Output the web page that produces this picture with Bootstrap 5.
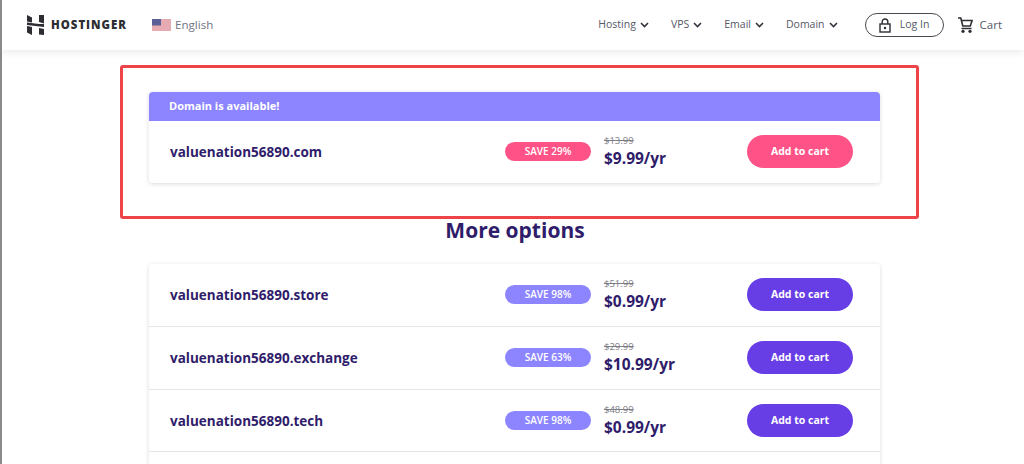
<!DOCTYPE html>
<html lang="en">
<head>
<meta charset="utf-8">
<title>Hostinger domain search</title>
<link rel="stylesheet" href="https://cdn.jsdelivr.net/npm/bootstrap@5.3.0/dist/css/bootstrap.min.css">
<style>
html,body{height:464px;overflow:hidden}
body{font-family:"Open Sans","Noto Sans",sans-serif;background:#fff;border-left:2px solid #8a8a8a;color:#2f1c6a}
.topbar{height:50px;background:#fff;box-shadow:0 2px 8px rgba(0,0,0,.09);padding:0 22px 0 25px;position:relative;z-index:2}
.brand-name{font-weight:800;font-size:11.4px;letter-spacing:1px;color:#2d2d33;margin-left:7px}
.lang-name{font-size:11.6px;color:#727586;margin-left:4px}
.lang-wrap{margin-left:25px}
.menu-item{font-size:10.5px;color:#555866;display:flex;align-items:center;gap:4px}
.menu-gap{gap:22px;margin-right:27px}
.login-pill{width:79px;height:24px;border:1px solid #4a4a52;border-radius:12px;font-size:10.5px;color:#555866;gap:9px;margin-right:14px}
.cart-text{font-size:11.5px;color:#555866;margin-left:7px}
.main-flow{margin-left:118px;width:799px;padding-top:15px}
.red-frame{border:3px solid #ec4448;border-radius:3px;padding:24px 35px 33px 26px;height:154px}
.result-panel{width:731px;border-radius:4px;background:#fff;box-shadow:0 1px 4px rgba(29,30,32,.16);overflow:hidden}
.avail-head{background:#8c85ff;color:#fff;height:29px;font-weight:700;font-size:11px;padding-left:20px;display:flex;align-items:center}
.dom-row{height:62px;display:flex;align-items:center;padding:0 0 1px 21px;background:#fff}
.dom-row+.dom-row{border-top:1px solid #e4e4ea;height:63px}
.dom-row+.dom-row+.dom-row{height:62px;padding-bottom:0}
.dom-name{font-weight:700;font-size:13.5px;width:335px;color:#2f1c6a;margin-top:2px}
.save-tag{width:86px;height:19px;border-radius:10px;color:#fff;font-size:10px;font-weight:600;display:flex;align-items:center;justify-content:center;margin-right:13px}
.tag-pink{background:#ff5286}
.tag-violet{background:#8c85ff}
.price-box{width:143px;line-height:1}
.old-price{font-size:9.5px;color:#7d7d86;text-decoration:line-through;display:block;margin-bottom:6px;margin-top:-1px}
.new-price{font-size:15.5px;font-weight:700;color:#2f1c6a;display:block}
.cart-btn{width:106px;height:33px;border-radius:17px;border:0;color:#fff;font-size:10.5px;font-weight:700;padding:0}
.btn-pink,.btn-pink:hover{background:#ff5286;color:#fff}
.btn-violet,.btn-violet:hover{background:#673de6;color:#fff}
.section-title{font-size:21px;font-weight:700;color:#2f1c6a;text-align:center;margin:0;height:45px;line-height:22px;width:790px}
.list-panel{margin-left:29px;height:300px}
</style>
</head>
<body>
<header class="topbar d-flex align-items-center justify-content-between">
  <div class="d-flex align-items-center">
    <svg width="17" height="20" viewBox="0 0 17 20" aria-hidden="true"><path fill="#2d2d33" d="M0 0l5 2.500v5l-5-1zM12 0l5-.5V8.500l-5-1.500zM0 7.500l12 1.500 5 0v3L0 10zM0 11l5 1v8l-5-2.500zM12 13l5 1v6l-5-.5z"/></svg>
    <span class="brand-name">HOSTINGER</span>
    <span class="lang-wrap d-flex align-items-center">
      <svg width="19" height="12" viewBox="0 0 19 12" aria-hidden="true"><rect width="19" height="12" fill="#f3d5d8"/><path d="M0 1h19M0 3h19M0 5h19M0 7h19M0 9h19M0 11h19" stroke="#d9808c" stroke-width="1"/><rect width="9" height="6.500" fill="#5b5f95"/></svg>
      <span class="lang-name">English</span>
    </span>
  </div>
  <div class="d-flex align-items-center">
    <nav class="d-flex menu-gap">
      <span class="menu-item">Hosting <svg width="9" height="6" viewBox="0 0 9 6" aria-hidden="true"><path d="M1 1l3.500 3.500L8 1" fill="none" stroke="#33333b" stroke-width="1.600"/></svg></span>
      <span class="menu-item">VPS <svg width="9" height="6" viewBox="0 0 9 6" aria-hidden="true"><path d="M1 1l3.500 3.500L8 1" fill="none" stroke="#33333b" stroke-width="1.600"/></svg></span>
      <span class="menu-item">Email <svg width="9" height="6" viewBox="0 0 9 6" aria-hidden="true"><path d="M1 1l3.500 3.500L8 1" fill="none" stroke="#33333b" stroke-width="1.600"/></svg></span>
      <span class="menu-item">Domain <svg width="9" height="6" viewBox="0 0 9 6" aria-hidden="true"><path d="M1 1l3.500 3.500L8 1" fill="none" stroke="#33333b" stroke-width="1.600"/></svg></span>
    </nav>
    <div class="login-pill d-flex align-items-center justify-content-center">
      <svg width="12" height="15" viewBox="0 0 12 15" aria-hidden="true"><rect x="1" y="6" width="10" height="8" fill="none" stroke="#2d2d33" stroke-width="1.400"/><path d="M3.200 6V3.800a2.800 2.800 0 0 1 5.600 0V6" fill="none" stroke="#2d2d33" stroke-width="1.400"/><circle cx="6" cy="10" r="1.200" fill="#2d2d33"/></svg>
      <span>Log In</span>
    </div>
    <svg width="15" height="16" viewBox="0 0 15 16" aria-hidden="true"><path d="M0 1h2.800l2 8h7.500l1.800-5.500H3.500" fill="none" stroke="#2d2d33" stroke-width="1.600"/><path d="M3.500 11.500h10" stroke="#2d2d33" stroke-width="1.500"/><circle cx="5" cy="14.300" r="1.600" fill="#2d2d33"/><circle cx="12" cy="14.300" r="1.600" fill="#2d2d33"/></svg>
    <span class="cart-text">Cart</span>
  </div>
</header>
<main class="main-flow">
  <section class="red-frame">
    <div class="result-panel">
      <div class="avail-head">Domain is available!</div>
      <div class="dom-row">
        <span class="dom-name">valuenation56890.com</span>
        <span class="save-tag tag-pink">SAVE 29%</span>
        <span class="price-box"><span class="old-price">$13.99</span><span class="new-price">$9.99/yr</span></span>
        <button class="btn cart-btn btn-pink" type="button">Add to cart</button>
      </div>
    </div>
  </section>
  <h2 class="section-title">More options</h2>
  <div class="result-panel list-panel">
    <div class="dom-row">
      <span class="dom-name">valuenation56890.store</span>
      <span class="save-tag tag-violet">SAVE 98%</span>
      <span class="price-box"><span class="old-price">$51.99</span><span class="new-price">$0.99/yr</span></span>
      <button class="btn cart-btn btn-violet" type="button">Add to cart</button>
    </div>
    <div class="dom-row">
      <span class="dom-name">valuenation56890.exchange</span>
      <span class="save-tag tag-violet">SAVE 63%</span>
      <span class="price-box"><span class="old-price">$29.99</span><span class="new-price">$10.99/yr</span></span>
      <button class="btn cart-btn btn-violet" type="button">Add to cart</button>
    </div>
    <div class="dom-row">
      <span class="dom-name">valuenation56890.tech</span>
      <span class="save-tag tag-violet">SAVE 98%</span>
      <span class="price-box"><span class="old-price">$48.99</span><span class="new-price">$0.99/yr</span></span>
      <button class="btn cart-btn btn-violet" type="button">Add to cart</button>
    </div>
    <div class="dom-row"></div>
  </div>
</main>
<script src="https://cdn.jsdelivr.net/npm/bootstrap@5.3.0/dist/js/bootstrap.bundle.min.js"></script>
</body>
</html>
